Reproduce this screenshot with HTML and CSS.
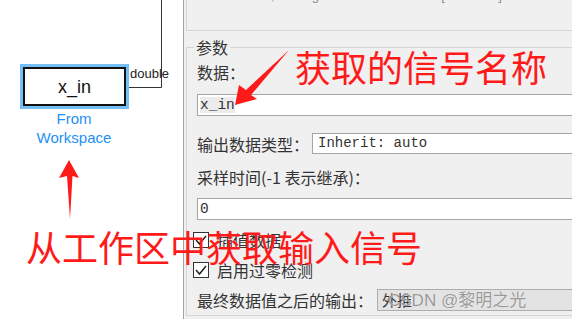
FILE: index.html
```html
<!DOCTYPE html>
<html lang="zh-CN">
<head>
  <meta charset="UTF-8">
  <title>From Workspace 参数</title>
  <link rel="stylesheet" href="styles.css">
</head>
<body>
  <div class="window">
    <div class="canvas">
      <svg class="wire" width="183" height="319">
        <polyline points="126,87.5 161.5,87.5 161.5,0" fill="none" stroke="#333" stroke-width="1"/>
      </svg>
      <div class="block">x_in</div>
      <span class="port-type">double</span>
      <div class="block-name">From<br>Workspace</div>
    </div>

    <div class="panel">
      <div class="desc-group">
        <p class="desc">For structure, use signals.values and time [time data]</p>
      </div>

      <fieldset class="params">
        <legend>参数</legend>
        <div class="label label-data">数据：</div>
        <div class="field field-data"><span class="sel">x_in</span></div>

        <div class="row row-type">
          <span class="label lbl-type">输出数据类型：</span>
          <div class="select">Inherit: auto</div>
        </div>

        <div class="label label-time">采样时间(-1 表示继承)：</div>
        <div class="field field-time">0</div>

        <label class="check">
          <span class="box"><svg width="14" height="14"><polyline points="2,7 5.5,11 12,3" fill="none" stroke="#222" stroke-width="1.5"/></svg></span>
          插值数据
        </label>
        <label class="check">
          <span class="box"><svg width="14" height="14"><polyline points="2,7 5.5,11 12,3" fill="none" stroke="#222" stroke-width="1.5"/></svg></span>
          启用过零检测
        </label>

        <div class="row row-final">
          <span class="label lbl-final">最终数据值之后的输出：</span>
          <div class="select select-grey">外推</div>
        </div>
      </fieldset>
    </div>
  </div>

  <!-- red annotations drawn over the screenshot -->
  <svg class="annot" width="572" height="319">
    <polygon points="69,160 79,178 72.5,176 70,219 67,176 59,178" fill="#ff1a1a"/>
    <polygon points="235,105 239,85 246,90 289,50 251,95 257,99" fill="#ff1a1a"/>
  </svg>
  <div class="note note-top">获取的信号名称</div>
  <div class="note note-bottom">从工作区中获取输入信号</div>
  <div class="watermark">CSDN @黎明之光</div>
</body>
</html>
```

FILE: styles.css
```css
body {
  margin: 0;
  width: 572px;
  height: 319px;
  overflow: hidden;
  position: relative;
  font-family: "Noto Sans CJK SC", sans-serif;
}

.window {
  display: flex;
  height: 319px;
}

/* model canvas */
.canvas {
  width: 183px;
  flex: none;
  background-color: #fff;
  border-right: 1px solid #a3a3a3;
  position: relative;
  font-family: "Liberation Sans", Arial, sans-serif;
}

.wire {
  position: absolute;
  top: 0;
  left: 0;
}

.block {
  position: absolute;
  left: 23px;
  top: 67px;
  width: 99px;
  height: 35px;
  border: 2px solid #111;
  background-color: #fff;
  box-shadow: 0 0 0 3px #74bff5;
  font-size: 18px;
  line-height: 36px;
  text-align: center;
  color: #111;
}

.port-type {
  position: absolute;
  left: 130px;
  top: 66px;
  font-size: 13px;
  line-height: 16px;
  color: #222;
}

.block-name {
  position: absolute;
  left: 14px;
  top: 109px;
  width: 120px;
  font-size: 15px;
  line-height: 19px;
  text-align: center;
  color: #1e90f5;
}

/* block parameters panel */
.panel {
  flex: 1;
  background-color: #f0f0f0;
  padding-left: 2px;
  overflow: hidden;
  color: #333;
}

.desc-group {
  margin-top: -20px;
  height: 49px;
  width: 420px;
  border: 1px solid #d5d5d5;
  border-right: none;
}

.desc {
  margin: 7px 0 0 10px;
  font-family: "Liberation Sans", Arial, sans-serif;
  font-size: 13px;
  line-height: 16px;
  color: #8a8a8a;
}

.params {
  margin: 6px 0 0 0;
  padding: 0 0 4px 10px;
  width: 420px;
  min-width: 0;
  border: 1px solid #d5d5d5;
  border-right: none;
}

.params legend {
  padding: 0 2px;
  margin-left: -3px;
  font-size: 16px;
  line-height: 20px;
}

.label {
  font-size: 16px;
  line-height: 20px;
  white-space: nowrap;
}

.label-data {
  margin-top: 5px;
}

.label-time {
  margin-top: 13px;
}

.field {
  height: 20px;
  border: 1px solid #a5a5a5;
  background-color: #fff;
  padding-left: 2px;
  font-family: "Liberation Mono", monospace;
  font-size: 14.5px;
  line-height: 20px;
  color: #333;
}

.field-data {
  margin-top: 12px;
}

.field-time {
  margin-top: 11px;
}

.sel {
  background-color: #ececec;
}

.row {
  display: flex;
  align-items: center;
}

.row-type {
  margin-top: 17px;
}

.row-final {
  margin-top: 9px;
}

.lbl-type {
  width: 115px;
  flex: none;
}

.lbl-final {
  width: 180px;
  flex: none;
}

.select {
  flex: 1;
  height: 19px;
  border: 1px solid #a5a5a5;
  background-color: #fff;
  padding-left: 5px;
  font-family: "Liberation Mono", monospace;
  font-size: 14px;
  line-height: 19px;
}

.select-grey {
  height: 20px;
  line-height: 20px;
  background-color: #e3e3e3;
  border-color: #adadad;
  font-family: "Noto Sans CJK SC", sans-serif;
  font-size: 15px;
  padding-left: 4px;
}

.check {
  display: flex;
  align-items: center;
  height: 20px;
  margin-top: 10px;
  font-size: 16px;
}

.box {
  width: 14px;
  height: 14px;
  margin-left: -4px;
  margin-right: 8px;
  border: 1px solid #333;
  background-color: #fff;
}

.box svg {
  display: block;
}

/* annotations */
.annot {
  position: absolute;
  top: 0;
  left: 0;
  pointer-events: none;
}

.note {
  position: absolute;
  font-size: 36px;
  line-height: 36px;
  color: #ff1a1a;
  white-space: nowrap;
}

.note-top {
  left: 295px;
  top: 48px;
}

.note-bottom {
  left: 26px;
  top: 228px;
}

.watermark {
  position: absolute;
  left: 388px;
  top: 290px;
  font-family: "Liberation Sans", "Noto Sans CJK SC", sans-serif;
  font-size: 17px;
  line-height: 22px;
  color: #999;
  text-shadow: 0 0 1px #fff;
  white-space: nowrap;
}
```
